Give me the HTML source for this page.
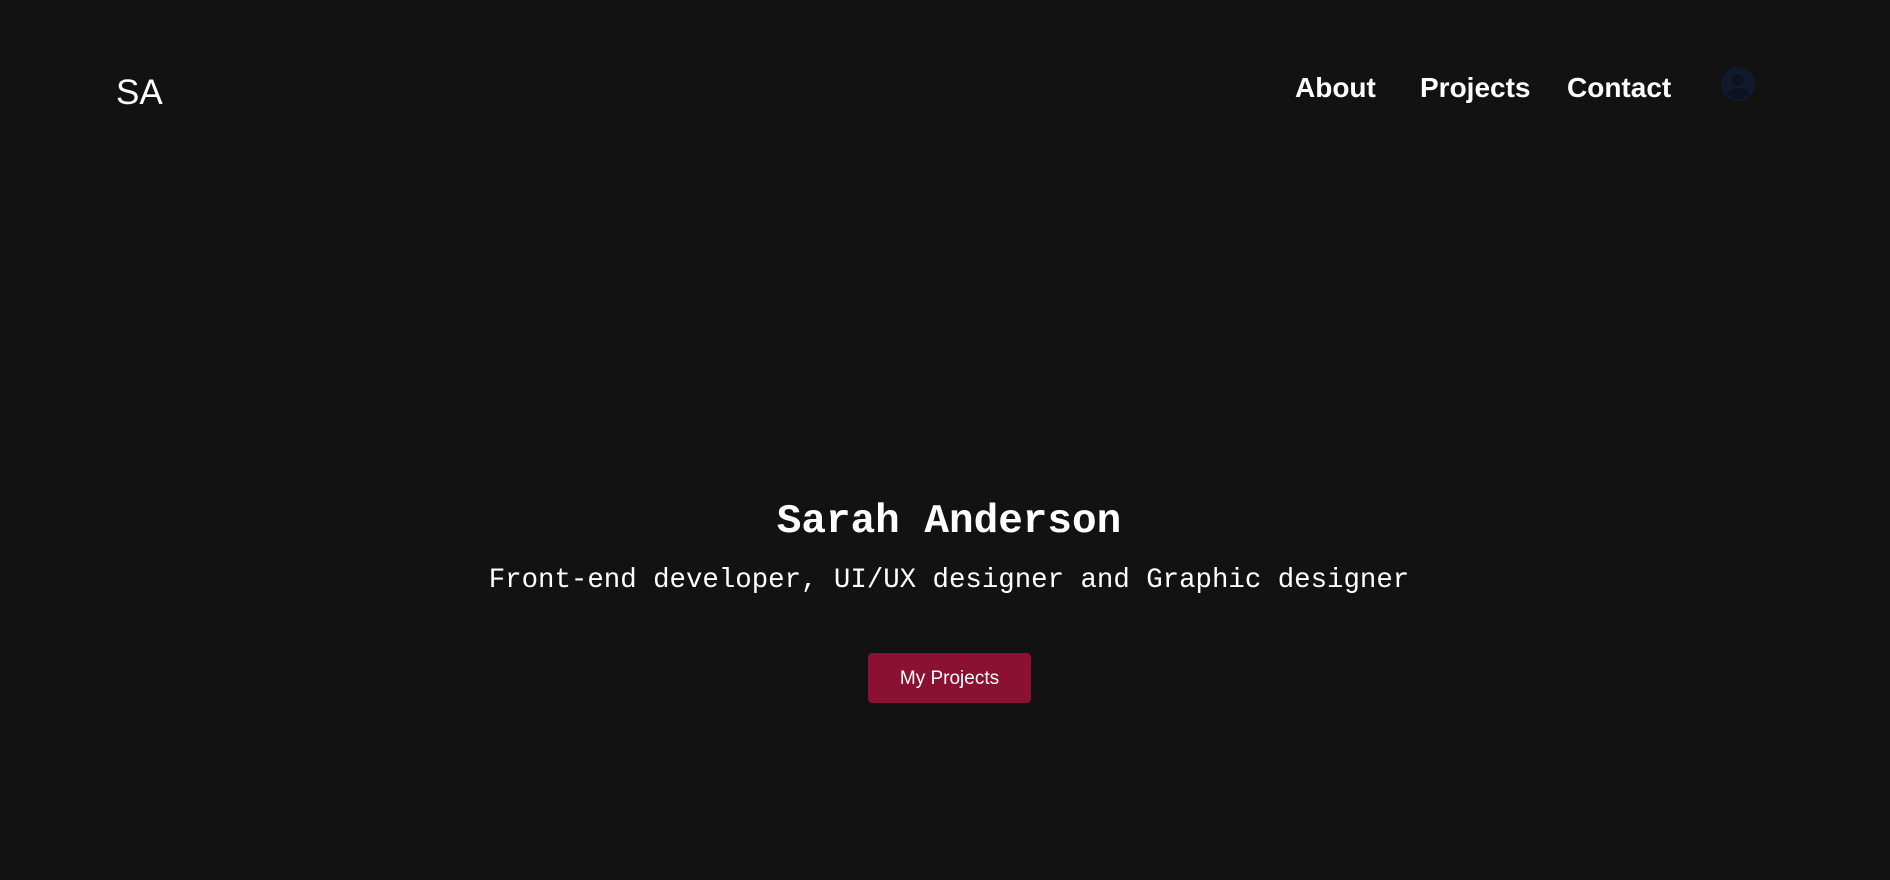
<!DOCTYPE html>
<html><head><meta charset="utf-8"><style>
html,body{margin:0;padding:0;width:1890px;height:880px;background:#121212;overflow:hidden;font-family:"Liberation Sans",sans-serif;color:#fff}
.logo{position:absolute;left:116px;top:71px;font-size:35px;line-height:44px;color:#fff}
.nav a{position:absolute;top:69px;font-size:28px;font-weight:bold;line-height:38px;color:#fff;text-decoration:none}
.av{position:absolute;left:1721px;top:67px;width:34px;height:34px}
h1{position:absolute;left:0;width:1898px;top:494px;margin:0;text-align:center;font-family:"Liberation Mono",monospace;font-size:41px;line-height:56px;font-weight:bold;color:#fff}
p{position:absolute;left:0;width:1898px;top:563px;margin:0;text-align:center;font-family:"Liberation Mono",monospace;font-size:27.4px;line-height:36px;color:#fff}
.btn{position:absolute;left:868px;top:653px;width:163px;height:50px;background:#8a1131;border-radius:4px;font-size:19px;line-height:52px;text-align:center;color:#fff}
</style></head><body>
<div class="logo">SA</div>
<div class="nav">
<a style="left:1295px">About</a>
<a style="left:1420px">Projects</a>
<a style="left:1567px">Contact</a>
</div>
<svg class="av" viewBox="0 0 34 34"><circle cx="17" cy="17" r="17" fill="#111a2b"/><circle cx="17" cy="13" r="6" fill="#0c1220"/><path d="M6 27c3-5 7-6 11-6s8 1 11 6c-3 3-7 5-11 5s-8-2-11-5z" fill="#0c1220"/></svg>
<h1>Sarah Anderson</h1>
<p>Front-end developer, UI/UX designer and Graphic designer</p>
<div class="btn">My Projects</div>
</body></html>
